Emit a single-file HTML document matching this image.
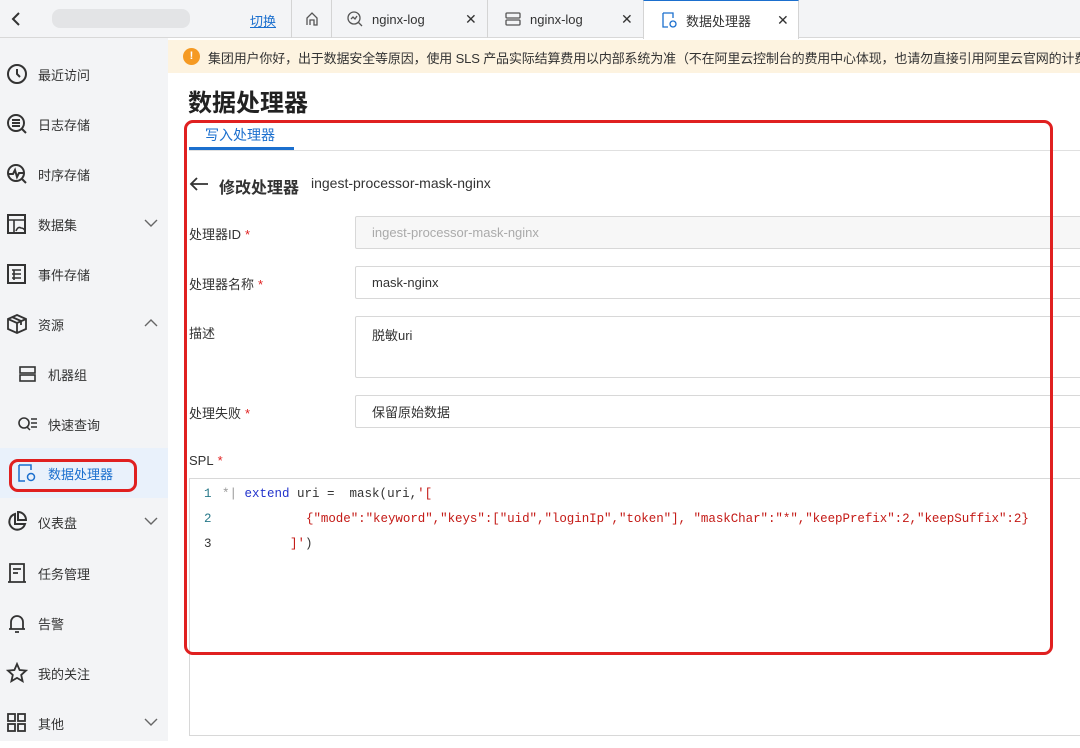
<!DOCTYPE html>
<html><head><meta charset="utf-8">
<style>
*{margin:0;padding:0;box-sizing:border-box}
body{width:1080px;height:741px;overflow:hidden;background:#fff;font-family:"Liberation Sans","Noto Sans CJK SC",sans-serif;color:#333;position:relative;font-size:13px}
.a{position:absolute}
.top{left:0;top:0;width:1080px;height:38px;background:#f3f4f6;border-bottom:1px solid #d8d8d8}
.tab{top:0;height:38px;border-left:1px solid #d4d4d4;display:flex;align-items:center;font-size:13px;color:#333}
.side{left:0;top:38px;width:168px;height:703px;background:#f3f4f6}
.si{position:absolute;left:0;width:168px;height:50px;display:flex;align-items:center;font-size:13px;color:#333}
.si svg{position:absolute}
.si span{position:absolute;left:38px}
.si svg.chev{left:144px;top:19px}
.lbl{left:189px;font-size:13px;color:#333}
.lbl b{color:#e02020;font-weight:normal;margin-left:4px}
.inp{left:355px;width:740px;height:33px;border:1px solid #d8d8d8;border-radius:2px;font-size:13px;padding:0 16px;display:flex;align-items:center;color:#333}
.code{font-family:"Liberation Mono","DejaVu Sans Mono",monospace;font-size:12.5px;white-space:pre}
</style></head><body>
<div class="a top"></div>
<svg class="a" style="left:10px;top:11px" width="12" height="16"><path d="M9 2 L3 8 L9 14" stroke="#333" stroke-width="2" fill="none"/></svg>
<div class="a" style="left:52px;top:9px;width:138px;height:19px;background:#e3e4e6;border-radius:8px"></div>
<div class="a" style="left:250px;top:11px;color:#1b6fce;text-decoration:underline;font-size:13px">切换</div>
<div class="a tab" style="left:291px;width:40px;justify-content:center"><svg width="16" height="16"><path d="M3 14V7L8 2L13 7V14H10V9H6V14" stroke="#555" fill="none" stroke-width="1.3"/></svg></div>
<div class="a tab" style="left:331px;width:156px;padding-left:14px"><svg width="18" height="18"><circle cx="8" cy="8" r="6" stroke="#555" fill="none" stroke-width="1.3"/><path d="M12.5 12.5L16 16M5 9L7 7L9 9L11 6" stroke="#555" fill="none" stroke-width="1.3"/></svg><span style="margin-left:8px">nginx-log</span><span style="position:absolute;left:133px;font-size:14px">✕</span></div>
<div class="a tab" style="left:487px;width:156px;padding-left:16px"><svg width="18" height="16"><rect x="2" y="2" width="14" height="5" rx="1" stroke="#555" fill="none" stroke-width="1.3"/><rect x="2" y="9" width="14" height="5" rx="1" stroke="#555" fill="none" stroke-width="1.3"/></svg><span style="margin-left:8px">nginx-log</span><span style="position:absolute;left:133px;font-size:14px">✕</span></div>
<div class="a tab" style="left:643px;width:156px;padding-left:16px;background:#fff;border-top:1px solid #1b6fce;border-right:1px solid #d4d4d4;height:39px"><svg width="18" height="18"><path d="M3 2H13V7M3 2V16H8" stroke="#1b6fce" fill="none" stroke-width="1.3"/><circle cx="13" cy="13" r="3" stroke="#1b6fce" fill="none" stroke-width="1.3"/></svg><span style="margin-left:8px">数据处理器</span><span style="position:absolute;left:133px;font-size:14px">✕</span></div>

<div class="a side"></div>
<div class="a" style="left:168px;top:40px;width:912px;height:33px;background:#fdf3e0"></div>
<div class="a" style="left:183px;top:48px;width:17px;height:17px;border-radius:50%;background:#f59a23;color:#fff;font-size:11px;text-align:center;line-height:17px;font-weight:bold">!</div>
<div class="a" style="left:208px;top:48px;font-size:13px;color:#333;white-space:nowrap;letter-spacing:-0.15px">集团用户你好，出于数据安全等原因，使用 SLS 产品实际结算费用以内部系统为准（不在阿里云控制台的费用中心体现，也请勿直接引用阿里云官网的计费文档</div>

<div class="si" style="top:49px"><svg style="left:6px" width="22" height="22"><circle cx="11" cy="11" r="9" stroke="#333" stroke-width="2" fill="none"/><path d="M11 6V11L14 14" stroke="#333" stroke-width="2" fill="none"/></svg><span>最近访问</span></div>
<div class="si" style="top:99px"><svg style="left:6px" width="22" height="22"><circle cx="10" cy="10" r="8" stroke="#333" stroke-width="2" fill="none"/><path d="M6 7H14M6 10H14M6 13H14M16 16L20 20" stroke="#333" stroke-width="2"/></svg><span>日志存储</span></div>
<div class="si" style="top:149px"><svg style="left:6px" width="22" height="22"><circle cx="10" cy="10" r="8" stroke="#333" stroke-width="2" fill="none"/><path d="M3 11H7L9 7L11 14L13 10H17M16 16L20 20" stroke="#333" stroke-width="2" fill="none"/></svg><span>时序存储</span></div>
<div class="si" style="top:199px"><svg style="left:7px" width="20" height="20"><rect x="1" y="1" width="17" height="18" stroke="#333" stroke-width="2" fill="none"/><path d="M1 6H18M7 6V19M9 17Q11 12 14 14Q17 14 18 17" stroke="#333" stroke-width="1.6" fill="none"/></svg><span>数据集</span><svg class="chev" width="14" height="10"><path d="M1 2L7 8L13 2" stroke="#666" stroke-width="1.4" fill="none"/></svg></div>
<div class="si" style="top:249px"><svg style="left:7px" width="20" height="20"><rect x="1" y="1" width="17" height="18" stroke="#333" stroke-width="2" fill="none"/><path d="M5 6H14M5 10H14M5 14H14M7 6V16" stroke="#333" stroke-width="1.6"/></svg><span>事件存储</span></div>
<div class="si" style="top:299px"><svg style="left:6px" width="22" height="22"><path d="M11 2L20 6V16L11 20L2 16V6Z M2 6L11 10L20 6M11 10V20M6 4L15 8V12" stroke="#333" stroke-width="1.8" fill="none"/></svg><span>资源</span><svg class="chev" width="14" height="10"><path d="M1 8L7 2L13 8" stroke="#666" stroke-width="1.4" fill="none"/></svg></div>
<div class="si" style="top:349px"><svg style="left:19px" width="18" height="16"><rect x="1" y="1" width="15" height="6" stroke="#333" stroke-width="1.6" fill="none"/><rect x="1" y="9" width="15" height="6" stroke="#333" stroke-width="1.6" fill="none"/></svg><span style="left:48px">机器组</span></div>
<div class="si" style="top:399px"><svg style="left:18px" width="20" height="16"><circle cx="6" cy="7" r="5" stroke="#333" stroke-width="1.6" fill="none"/><path d="M9 11L12 14M13 3H19M13 7H19M13 11H19" stroke="#333" stroke-width="1.5"/></svg><span style="left:48px">快速查询</span></div>
<div class="si" style="top:448px;background:#e9f1fb"><svg style="left:17px" width="20" height="20"><path d="M2 2H14V7M2 2V18H8" stroke="#1b6fce" fill="none" stroke-width="1.5"/><circle cx="14" cy="14" r="3.5" stroke="#1b6fce" fill="none" stroke-width="1.5"/></svg><span style="left:48px;color:#1b6fce">数据处理器</span></div>
<div class="a" style="left:9px;top:459px;width:128px;height:33px;border:3px solid #e02020;border-radius:9px"></div>
<div class="si" style="top:497px"><svg style="left:6px" width="22" height="22"><path d="M9 3A8 8 0 1 0 19 13H9Z" stroke="#333" stroke-width="2" fill="none"/><path d="M12 1A8 8 0 0 1 20 9H12Z" stroke="#333" stroke-width="2" fill="none"/></svg><span>仪表盘</span><svg class="chev" width="14" height="10"><path d="M1 2L7 8L13 2" stroke="#666" stroke-width="1.4" fill="none"/></svg></div>
<div class="si" style="top:548px"><svg style="left:7px" width="20" height="20"><path d="M3 1H17V19H3Z M6 6H14M6 10H11M1 19H19" stroke="#333" stroke-width="1.8" fill="none"/></svg><span>任务管理</span></div>
<div class="si" style="top:598px"><svg style="left:7px" width="20" height="20"><path d="M4 16V9A6 6 0 0 1 16 9V16H2H18M8 19H12" stroke="#333" stroke-width="1.8" fill="none"/></svg><span>告警</span></div>
<div class="si" style="top:648px"><svg style="left:6px" width="22" height="22"><path d="M11 2L13.6 8L20 8.6L15.2 12.9L16.6 19.2L11 15.9L5.4 19.2L6.8 12.9L2 8.6L8.4 8Z" stroke="#333" stroke-width="1.8" fill="none"/></svg><span>我的关注</span></div>
<div class="si" style="top:698px"><svg style="left:7px" width="20" height="20"><rect x="1" y="1" width="7" height="7" stroke="#333" stroke-width="1.8" fill="none"/><rect x="11" y="1" width="7" height="7" stroke="#333" stroke-width="1.8" fill="none"/><rect x="1" y="11" width="7" height="7" stroke="#333" stroke-width="1.8" fill="none"/><rect x="11" y="11" width="7" height="7" stroke="#333" stroke-width="1.8" fill="none"/></svg><span>其他</span><svg class="chev" width="14" height="10"><path d="M1 2L7 8L13 2" stroke="#666" stroke-width="1.4" fill="none"/></svg></div>

<div class="a" style="left:188px;top:83px;font-size:24px;font-weight:bold;color:#222">数据处理器</div>
<div class="a" style="left:189px;top:150px;width:891px;height:1px;background:#e0e0e0"></div>
<div class="a" style="left:189px;top:147px;width:105px;height:3px;background:#1b6fce"></div>
<div class="a" style="left:205px;top:125px;font-size:14px;color:#1b6fce">写入处理器</div>
<svg class="a" style="left:189px;top:176px" width="20" height="16"><path d="M19 8H2M8 2L2 8L8 14" stroke="#333" stroke-width="1.8" fill="none"/></svg>
<div class="a" style="left:219px;top:174px;font-size:16px;font-weight:bold;color:#333">修改处理器</div>
<div class="a" style="left:311px;top:175px;font-size:14px;color:#333">ingest-processor-mask-nginx</div>

<div class="a lbl" style="top:224px">处理器ID<b>*</b></div>
<div class="a inp" style="top:216px;background:#f7f7f7;color:#aaa">ingest-processor-mask-nginx</div>
<div class="a lbl" style="top:274px">处理器名称<b>*</b></div>
<div class="a inp" style="top:266px">mask-nginx</div>
<div class="a lbl" style="top:323px">描述</div>
<div class="a inp" style="top:316px;height:62px;align-items:flex-start;padding-top:8px">脱敏uri</div>
<div class="a lbl" style="top:403px">处理失败<b>*</b></div>
<div class="a inp" style="top:395px">保留原始数据</div>
<div class="a lbl" style="top:453px">SPL<b>*</b></div>
<div class="a" style="left:189px;top:478px;width:900px;height:258px;border:1px solid #d8d8d8"></div>
<div class="a code" style="left:204px;top:487px;color:#2a7a8a">1</div>
<div class="a code" style="left:204px;top:512px;color:#2a7a8a">2</div>
<div class="a code" style="left:204px;top:537px;color:#333">3</div>
<div class="a code" style="left:222px;top:487px"><span style="color:#999">*|</span> <span style="color:#2233cc">extend</span> uri =  mask(uri,<span style="color:#c41a16">'[</span></div>
<div class="a code" style="left:306px;top:512px;color:#c41a16;letter-spacing:-0.05px">{"mode":"keyword","keys":["uid","loginIp","token"], "maskChar":"*","keepPrefix":2,"keepSuffix":2}</div>
<div class="a code" style="left:290px;top:537px"><span style="color:#c41a16">]'</span>)</div>

<div class="a" style="left:184px;top:120px;width:869px;height:535px;border:3px solid #e02020;border-radius:9px"></div>
</body></html>
